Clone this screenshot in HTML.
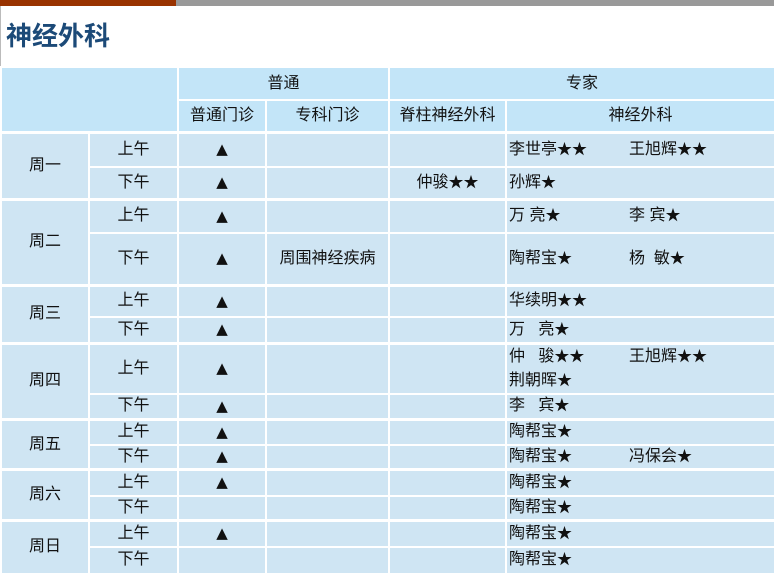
<!DOCTYPE html>
<html><head><meta charset="utf-8"><style>
body{margin:0;width:774px;height:572px;overflow:hidden;background:#fff;font-family:"Liberation Sans","Noto Sans CJK SC",sans-serif;font-size:16px;color:#111;position:relative}
.bar1{position:absolute;left:0;top:0;width:176px;height:6px;background:#993300}
.bar2{position:absolute;left:176px;top:0;width:598px;height:6px;background:#999}
.lb{position:absolute;left:0;top:6px;width:1px;height:566px;background:#bbb}
h1{position:absolute;left:6px;top:18px;margin:0;font-size:26px;font-weight:bold;color:#1c4a78;font-family:"Liberation Sans","Noto Sans CJK SC",sans-serif;line-height:36px}
table{position:absolute;left:0px;top:66px;border-collapse:collapse;table-layout:fixed;width:774px}
td{border:2px solid #fff;background:#cfe5f3;text-align:center;padding:0;line-height:20px;white-space:nowrap}
tr.h td{background:#c3e5f8}
tr.d td{border-top-width:3px}
td.l{text-align:left;padding-left:2px}
.s{display:inline-block;width:120px}
b{font-weight:normal;font-size:15px}
i{font-style:normal;font-size:15px;line-height:20px;font-family:"DejaVu Sans",sans-serif}
</style></head><body>
<div class="bar1"></div><div class="bar2"></div><div class="lb"></div>
<h1>神经外科</h1>
<table>
<colgroup><col style="width:88px"><col style="width:89px"><col style="width:88px"><col style="width:123px"><col style="width:117px"><col style="width:269px"></colgroup>
<tr class="h" style="height:33px"><td colspan="2" rowspan="2"></td><td colspan="2">普通</td><td colspan="2">专家</td></tr>
<tr class="h" style="height:32px"><td>普通门诊</td><td>专科门诊</td><td>脊柱神经外科</td><td>神经外科</td></tr>
<tr class="d" style="height:35px"><td rowspan="2">周一</td><td>上午</td><td><i>▲</i></td><td></td><td></td><td class="l"><span class="s">李世亭<b>★★</b></span>王旭辉<b>★★</b></td></tr>
<tr style="height:32px"><td>下午</td><td><i>▲</i></td><td></td><td>仲骏<b>★★</b></td><td class="l">孙辉<b>★</b></td></tr>
<tr class="d" style="height:34px"><td rowspan="2">周二</td><td>上午</td><td><i>▲</i></td><td></td><td></td><td class="l"><span class="s">万 亮<b>★</b></span>李 宾<b>★</b></td></tr>
<tr style="height:52px"><td>下午</td><td><i>▲</i></td><td>周围神经疾病</td><td></td><td class="l"><span class="s">陶帮宝<b>★</b></span>杨&nbsp; 敏<b>★</b></td></tr>
<tr class="d" style="height:32px"><td rowspan="2">周三</td><td>上午</td><td><i>▲</i></td><td></td><td></td><td class="l">华续明<b>★★</b></td></tr>
<tr style="height:26px"><td>下午</td><td><i>▲</i></td><td></td><td></td><td class="l">万&nbsp;&nbsp; 亮<b>★</b></td></tr>
<tr class="d" style="height:50px"><td rowspan="2">周四</td><td>上午</td><td><i>▲</i></td><td></td><td></td><td class="l" style="line-height:24px"><span class="s">仲&nbsp;&nbsp; 骏<b>★★</b></span>王旭辉<b>★★</b><br>荆朝晖<b>★</b></td></tr>
<tr style="height:26px"><td>下午</td><td><i>▲</i></td><td></td><td></td><td class="l">李&nbsp;&nbsp; 宾<b>★</b></td></tr>
<tr class="d" style="height:25px"><td rowspan="2">周五</td><td>上午</td><td><i>▲</i></td><td></td><td></td><td class="l">陶帮宝<b>★</b></td></tr>
<tr style="height:25px"><td>下午</td><td><i>▲</i></td><td></td><td></td><td class="l"><span class="s">陶帮宝<b>★</b></span>冯保会<b>★</b></td></tr>
<tr class="d" style="height:26px"><td rowspan="2">周六</td><td>上午</td><td><i>▲</i></td><td></td><td></td><td class="l">陶帮宝<b>★</b></td></tr>
<tr style="height:25px"><td>下午</td><td></td><td></td><td></td><td class="l">陶帮宝<b>★</b></td></tr>
<tr class="d" style="height:26px"><td rowspan="2">周日</td><td>上午</td><td><i>▲</i></td><td></td><td></td><td class="l">陶帮宝<b>★</b></td></tr>
<tr style="height:27px"><td>下午</td><td></td><td></td><td></td><td class="l">陶帮宝<b>★</b></td></tr>
</table>
</body></html>
